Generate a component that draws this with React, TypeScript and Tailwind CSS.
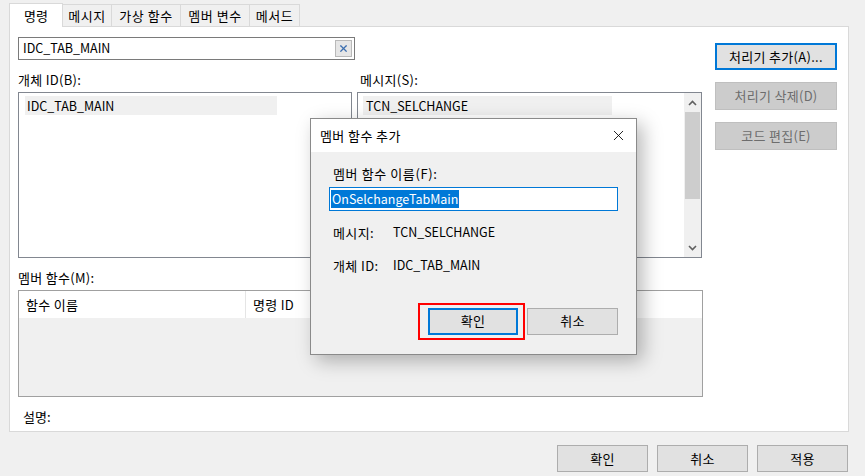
import { X } from 'lucide-react';

const font = { fontFamily: '"Noto Sans CJK KR", "Noto Sans", sans-serif' };

function Tab({ label, active, width }: { label: string; active?: boolean; width: string }) {
  if (active) {
    return (
      <div className={`relative z-10 -mb-px flex h-[24px] items-center justify-center border border-b-0 border-[#d9d9d9] bg-white text-[13px] ${width}`}>
        {label}
      </div>
    );
  }
  return (
    <div className={`-ml-px flex h-[22px] items-center justify-center border border-b-0 border-[#d9d9d9] bg-[#f0f0f0] text-[13px] tracking-[0.5px] ${width}`}>
      {label}
    </div>
  );
}

function WinButton({
  label,
  className,
  focused,
  disabled,
}: {
  label: string;
  className?: string;
  focused?: boolean;
  disabled?: boolean;
}) {
  const tone = disabled
    ? 'bg-[#cccccc] border-[#bfbfbf] text-[#6d6d6d]'
    : focused
      ? 'bg-[#e1e1e1] border-[#0078d7] border-2 text-black'
      : 'bg-[#e1e1e1] border-[#adadad] text-black';
  return (
    <div className={`flex h-[27px] items-center justify-center border text-[13px] tracking-[0.3px] ${tone} ${className ?? ''}`}>
      {label}
    </div>
  );
}

function Chevron({ up }: { up?: boolean }) {
  return (
    <svg width="9" height="6" viewBox="0 0 9 6" className="mx-auto">
      <path
        d={up ? 'M1 5 L4.5 1.5 L8 5' : 'M1 1 L4.5 4.5 L8 1'}
        fill="none"
        stroke="#606060"
        strokeWidth="1.6"
      />
    </svg>
  );
}

function AddMemberDialog() {
  return (
    <div className="absolute left-[310px] top-[118px] flex h-[237px] w-[327px] flex-col border border-[#8a8a8a] bg-[#f0f0f0] shadow-[6px_6px_18px_rgba(0,0,0,0.28)]">
      <div className="flex h-[33px] items-center justify-between bg-white pl-[9px] pr-[9px] text-[13px] tracking-[0.4px]">
        <span>멤버 함수 추가</span>
        <X size={17} strokeWidth={1.2} className="text-black" />
      </div>
      <div className="flex flex-1 flex-col px-[18px] pt-[12px] text-[12.5px]">
        <div className="pl-[4px] text-[13px] tracking-[0.6px]">멤버 함수 이름(F):</div>
        <div className="mt-[3px] flex h-[24px] items-center border border-[#0078d7] bg-white pl-[1px]">
          <span className="bg-[#0078d7] px-[1px] leading-[18px] text-white">OnSelchangeTabMain</span>
        </div>
        <div className="mt-[12px] flex pl-[4px]">
          <span className="w-[60px] text-[13px] tracking-[0.4px]">메시지:</span>
          <span>TCN_SELCHANGE</span>
        </div>
        <div className="mt-[14px] flex pl-[4px]">
          <span className="w-[60px] text-[13px] tracking-[0.4px]">개체 ID:</span>
          <span>IDC_TAB_MAIN</span>
        </div>
        <div className="mt-[27px] flex items-center justify-end gap-[2px]">
          <div className="border-2 border-[#ff0000] pb-[3px] pl-[8px] pr-[5px] pt-[3px]">
            <WinButton label="확인" focused className="w-[90px]" />
          </div>
          <WinButton label="취소" className="w-[91px]" />
        </div>
      </div>
    </div>
  );
}

export default function App() {
  return (
    <div className="relative h-[476px] w-[865px] overflow-hidden bg-[#f0f0f0] text-[12.5px] text-black" style={font}>
      <div className="flex h-[26px] items-end pl-[9px]">
        <Tab label="명령" active width="w-[54px]" />
        <Tab label="메시지" width="w-[50px]" />
        <Tab label="가상 함수" width="w-[70px]" />
        <Tab label="멤버 변수" width="w-[70px]" />
        <Tab label="메서드" width="w-[51px]" />
      </div>

      <div className="ml-[9px] flex h-[406px] w-[840px] border border-[#d9d9d9] bg-white pl-[8px] pt-[10px]">
        <div className="flex w-[685px] flex-col">
          <div className="flex h-[23px] w-[337px] items-center justify-between border border-[#7a7a7a] pl-[4px] pr-[2px]">
            <span>IDC_TAB_MAIN</span>
            <div className="flex h-[17px] w-[17px] items-center justify-center border border-[#b9b9b9] bg-[#e6e6e6]">
              <X size={11} strokeWidth={2.6} className="text-[#3d6fb0]" />
            </div>
          </div>

          <div className="mt-[13px] flex gap-[5px]">
            <div className="flex w-[334px] flex-col">
              <div className="h-[19px] text-[13px] leading-[14px] tracking-[0.3px]">개체 ID(B):</div>
              <div className="h-[166px] border border-[#828790] p-[3px] pl-[6px]">
                <div className="w-[252px] bg-[#f0f0f0] pl-[2px] leading-[19px]">IDC_TAB_MAIN</div>
              </div>
            </div>
            <div className="flex w-[345px] flex-col">
              <div className="h-[19px] pl-[3px] text-[13px] leading-[14px] tracking-[0.3px]">메시지(S):</div>
              <div className="flex h-[166px] border border-[#828790]">
                <div className="flex-1 p-[3px] pl-[5px]">
                  <div className="w-[249px] bg-[#f0f0f0] pl-[3px] leading-[19px]">TCN_SELCHANGE</div>
                </div>
                <div className="flex w-[17px] flex-col bg-[#f0f0f0]">
                  <div className="flex h-[19px] items-center">
                    <Chevron up />
                  </div>
                  <div className="mx-[1px] h-[87px] bg-[#cdcdcd]" />
                  <div className="flex-1" />
                  <div className="flex h-[19px] items-center">
                    <Chevron />
                  </div>
                </div>
              </div>
            </div>
          </div>

          <div className="mt-[13px] h-[19px] text-[13px] leading-[14px] tracking-[0.3px]">멤버 함수(M):</div>
          <div className="flex h-[107px] flex-col border border-[#a0a0a0] bg-[#f0f0f0]">
            <div className="flex h-[27px] items-center bg-white text-[13px] tracking-[0.3px]">
              <div className="w-[227px] border-r border-[#e5e5e5] pl-[7px] leading-[27px]">함수 이름</div>
              <div className="pl-[7px]">명령 ID</div>
            </div>
          </div>

          <div className="mt-[10px] pl-[5px] text-[13px]">설명:</div>
        </div>

        <div className="ml-[12px] flex w-[122px] flex-col gap-[12px] pt-[6px]">
          <WinButton label="처리기 추가(A)..." focused />
          <WinButton label="처리기 삭제(D)" disabled className="h-[28px]" />
          <WinButton label="코드 편집(E)" disabled className="h-[28px]" />
        </div>
      </div>

      <div className="mt-[13px] flex justify-end gap-[9px] pr-[17px]">
        <WinButton label="확인" className="w-[91px]" />
        <WinButton label="취소" className="w-[91px]" />
        <WinButton label="적용" className="w-[91px]" />
      </div>

      <AddMemberDialog />
    </div>
  );
}
